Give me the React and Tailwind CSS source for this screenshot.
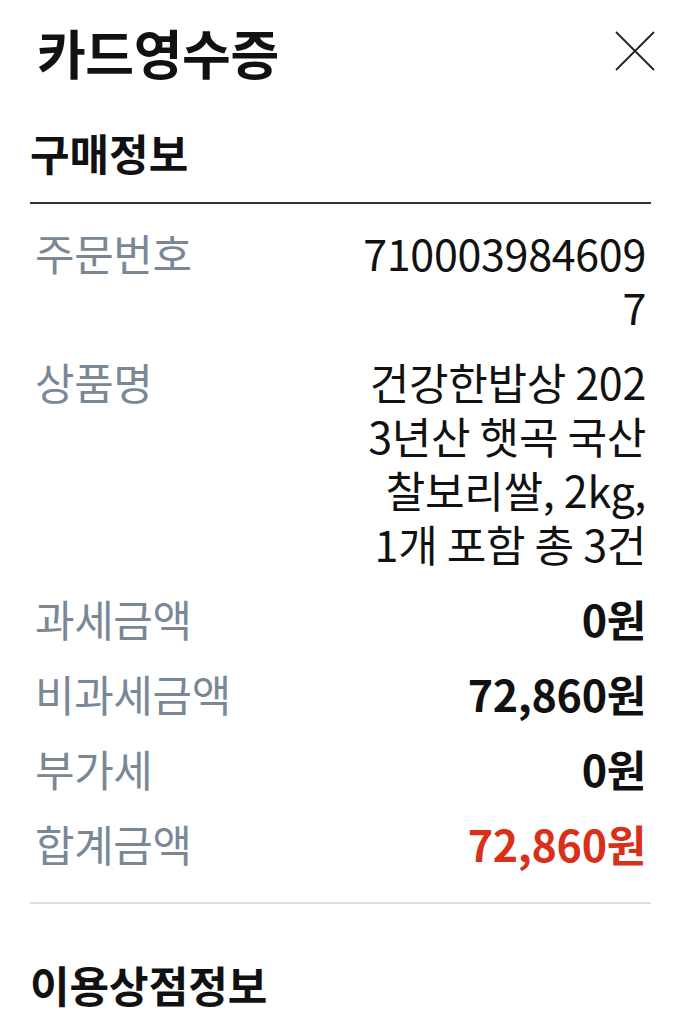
import React from "react";

const font = { fontFamily: '"Noto Sans CJK KR", "Noto Sans", sans-serif' };

function Row({ label, lines, className = "" }) {
  return (
    <div className="flex justify-between items-start">
      <div className="text-[43px] leading-[54px] text-[#7a8896] whitespace-nowrap tracking-[-0.4px]">{label}</div>
      <p className={"text-right text-[43px] leading-[54px] whitespace-nowrap tracking-[-0.3px] " + className}>
        {lines.map((l, i) => (
          <React.Fragment key={i}>
            {i > 0 && <br />}
            {l}
          </React.Fragment>
        ))}
      </p>
    </div>
  );
}

export default function App() {
  return (
    <div className="w-[681px] min-h-[1024px] bg-white text-[#111]" style={font}>
      <div className="flex items-center justify-between pl-[37px] pr-[26px] pt-[21px]">
        <h1 className="text-[53px] leading-[62px] font-bold tracking-[-0.4px]">카드영수증</h1>
        <svg width="40" height="40" viewBox="0 0 40 40" className="mt-[-2px]">
          <path d="M1 1 L39 39 M39 1 L1 39" stroke="#222" strokeWidth="1.8" fill="none" />
        </svg>
      </div>
      <div className="px-[30px]">
        <h2 className="mt-[44px] text-[43px] leading-[50px] font-bold">구매정보</h2>
        <div className="mt-[25px] h-[2px] bg-[#333]" />
        <div className="px-[5px] pt-[21px] flex flex-col gap-[21px]">
          <Row label="주문번호" lines={["710003984609", "7"]} />
          <Row
            label="상품명"
            lines={["건강한밥상 202", "3년산 햇곡 국산", "찰보리쌀, 2kg,", "1개 포함 총 3건"]}
          />
          <Row label="과세금액" lines={["0원"]} className="font-bold" />
          <Row label="비과세금액" lines={["72,860원"]} className="font-bold" />
          <Row label="부가세" lines={["0원"]} className="font-bold" />
          <Row label="합계금액" lines={["72,860원"]} className="font-bold text-[#d9301a]" />
        </div>
        <div className="mt-[32px] h-[2px] bg-[#dddddd]" />
        <h2 className="mt-[55px] text-[43px] leading-[50px] font-bold">이용상점정보</h2>
      </div>
    </div>
  );
}
